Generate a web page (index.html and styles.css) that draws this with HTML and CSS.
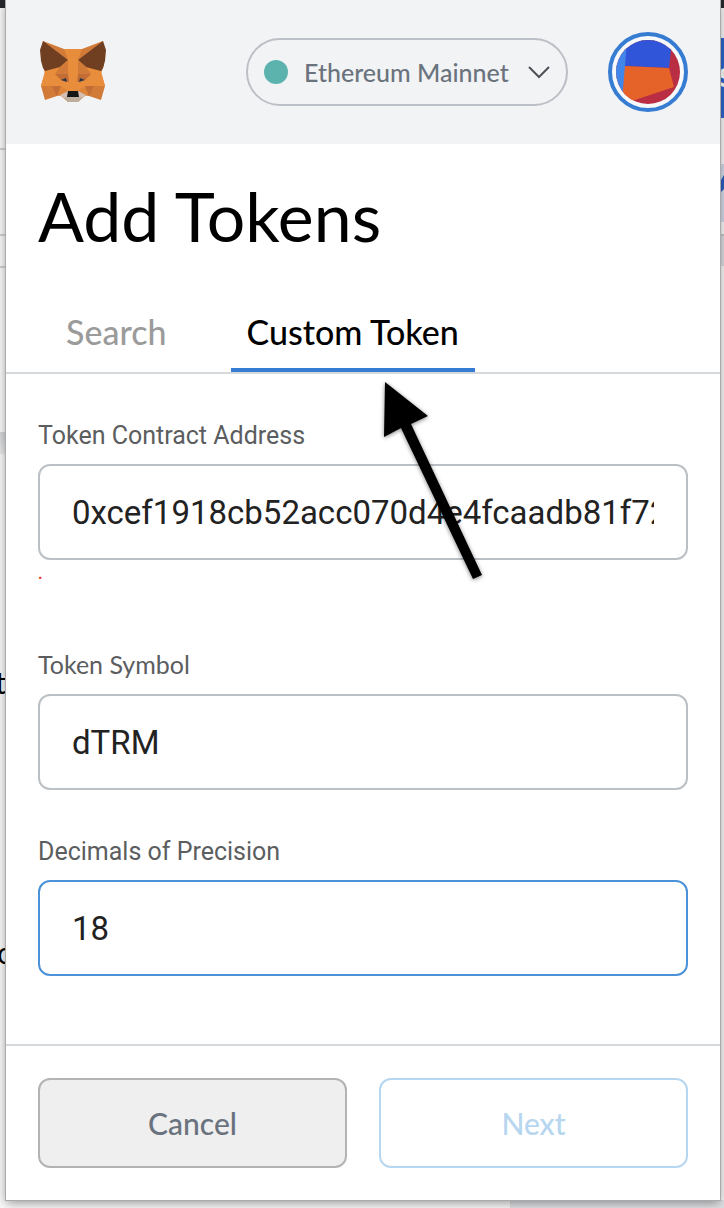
FILE: index.html
```
<!DOCTYPE html>
<html lang="en">
<head>
  <meta charset="UTF-8">
  <meta name="viewport" content="width=device-width, initial-scale=1">
  <title>Add Tokens</title>
  <link rel="stylesheet" href="styles.css">
</head>
<body>

  <!-- page behind the popup -->
  <div class="backdrop" aria-hidden="true">
    <div class="backdrop-bar"></div>
    <div class="backdrop-lines"></div>
    <div class="backdrop-strip"></div>
    <div class="backdrop-button">s</div>
    <div class="backdrop-tag">
      <svg viewBox="0 0 6 58"><path d="M0 21 6 11V25L0 31z" fill="#2c5fc0"/><path d="M1 20 3 22 1 24z" fill="#fff"/></svg>
    </div>
    <div class="backdrop-right"></div>
    <div class="backdrop-bottom"></div>
    <span class="backdrop-text first">t</span>
    <span class="backdrop-text second">o</span>
  </div>

  <main class="popup">
    <header class="app-header">
      <svg class="fox" viewBox="0 0 66 62" role="img" aria-label="MetaMask">
        <path fill="#d27b38" d="M3 0 24 8H42L63 0 64 24 61 32 65 45 61 59 46 54 38 61H28L20 54 5 59 1 45 5 32 2 20z"/>
        <path fill="#e88d3b" d="M5 30 20 26 28 19 24 8H42L38 19 46 26 61 30 65 45H53L46 55 38 50H28L20 55 13 45H1z"/>
        <path fill="#703f22" d="M3 0 28 19 20 26 5 30 3 27 1 20 0 9zM63 0 38 19 46 26 61 30 63 27 65 20 66 9z"/>
        <path fill="#d27b38" d="M28 19V33H15L20 26zM38 19V33H51L46 26z"/>
        <path fill="#c26c36" d="M15 33H28L29 41 21 39zM51 33H38L37 41 45 39zM12 45H21L17 55zM54 45H45L49 55z"/>
        <path fill="#d27b38" d="M21 45 28 50 20 55 17 55zM45 45 38 50 46 55 49 55z" opacity=".5"/>
        <path fill="#d5bfb2" d="M20 54 28 50H38L46 54 38 60H28z"/>
        <path fill="#bfae9e" d="M24 57 28 55H38L42 57 38 61H28z"/>
        <path fill="#161616" d="M28 50H38L39 56H27z"/>
        <path fill="#2b3547" d="M21 39 26 37 27 41zM45 39 40 37 39 41z"/>
      </svg>
      <button class="network" type="button">
        <span class="network-dot"></span>
        <span class="network-name">Ethereum Mainnet</span>
        <svg class="chevron" viewBox="0 0 22 14" aria-hidden="true">
          <path d="M1 2 11 12 21 2" fill="none" stroke="#4d5156" stroke-width="2"/>
        </svg>
      </button>
      <button class="account" type="button" aria-label="My account">
        <svg class="identicon" viewBox="0 0 64 64" aria-hidden="true">
          <path fill="#b92e42" d="M0 0H64V64H0z"/>
          <path fill="#4286ea" d="M0 0H12L7 64H0z"/>
          <path fill="#3055d8" d="M11 0H56L53 28 9 26z"/>
          <path fill="#e56229" d="M9 26 53 28 58 47 16 61 6 60z"/>
        </svg>
      </button>
    </header>

    <h1 class="title">Add Tokens</h1>

    <nav class="tabs">
      <a class="tab" href="#search">Search</a>
      <a class="tab active" href="#custom" aria-current="page">Custom Token</a>
      <svg class="arrow" viewBox="0 0 110 210" aria-hidden="true">
        <path d="M10 6 53 40 36 48 107 199 98 203 26 52 9 61z"/>
      </svg>
    </nav>

    <form class="token-form">
      <div class="fields">
        <div class="field">
          <label for="address">Token Contract Address</label>
          <input id="address" type="text" value="0xcef1918cb52acc070d4e4fcaadb81f7272">
          <p class="error">.</p>
        </div>
        <div class="field">
          <label class="label-brand" for="symbol">Token Symbol</label>
          <input id="symbol" type="text" value="dTRM">
        </div>
        <div class="field">
          <label for="decimals">Decimals of Precision</label>
          <input id="decimals" class="focused" type="text" inputmode="numeric" value="18">
        </div>
      </div>
      <footer class="actions">
        <button class="btn cancel" type="button">Cancel</button>
        <button class="btn next" type="submit" disabled>Next</button>
      </footer>
    </form>
  </main>

</body>
</html>
```
FILE: styles.css
```
* {
  box-sizing: border-box;
}

body {
  margin: 0;
  padding: 0 4px 8px 6px;
  background: #f9f9f9;
  font-family: Lato, sans-serif;
  overflow: hidden;
}

.popup {
  position: relative;
  background: #fff;
  box-shadow: 0 0 0 1px #aaa, 0 3px 10px rgba(0, 0, 0, 0.4);
}

.app-header {
  display: flex;
  align-items: center;
  height: 144px;
  padding: 0 32px 0 34px;
  background: #f2f3f5;
}

.fox {
  width: 66px;
  height: 62px;
  margin-right: auto;
}

.network {
  display: flex;
  align-items: center;
  height: 68px;
  width: 322px;
  margin-right: 40px;
  padding: 0 16px;
  border: 2px solid #bbbfc6;
  border-radius: 34px;
  background: none;
  color: #6a737d;
  font: 500 25px Lato, sans-serif;
}

.network-dot {
  width: 24px;
  height: 24px;
  margin-right: 16px;
  border-radius: 50%;
  background: #5cb3ae;
}

.chevron {
  width: 22px;
  height: 14px;
  margin-left: auto;
}

.account {
  width: 80px;
  height: 80px;
  padding: 4px;
  border: 4px solid #377cd3;
  border-radius: 50%;
  background: #f7f8fa;
}

.identicon {
  display: block;
  width: 64px;
  height: 64px;
  border-radius: 50%;
}

.title {
  margin: 0;
  padding: 28px 32px 0;
  font-size: 68px;
  font-weight: 400;
  line-height: 88px;
  color: #000;
}

.tabs {
  position: relative;
  display: flex;
  gap: 48px;
  margin-top: 36px;
  padding: 0 44px;
  border-bottom: 2px solid #d6d9dc;
}

.tab {
  padding: 16px;
  border-bottom: 4px solid transparent;
  color: #9b9b9b;
  font-size: 34px;
  font-weight: 500;
  line-height: 40px;
  text-decoration: none;
}

.tab.active {
  border-bottom-color: #377cd3;
  color: #000;
}

/* pointer drawn over the form */
.arrow {
  position: absolute;
  z-index: 1;
  top: 80px;
  left: 369px;
  width: 110px;
  height: 210px;
  filter: drop-shadow(0 1px 2px rgba(0, 0, 0, 0.5));
  pointer-events: none;
}

.fields {
  display: flex;
  flex-direction: column;
  gap: 46px;
  padding: 46px 32px 68px;
}

.field label {
  display: block;
  margin-bottom: 12px;
  color: #5b5d5f;
  font-family: Roboto, sans-serif;
  font-size: 25px;
  line-height: 32px;
}

.field .label-brand {
  margin-bottom: 14px;
  font-family: Lato, sans-serif;
}

.field input {
  display: block;
  width: 100%;
  height: 96px;
  padding: 0 32px;
  border: 2px solid #bbc0c5;
  border-radius: 12px;
  background: #fff;
  color: #222;
  font-family: Roboto, sans-serif;
  font-size: 33px;
  outline: none;
}

.field input.focused {
  border-color: #4b92d9;
}

.error {
  height: 24px;
  margin: 4px 0 14px;
  color: #e8432f;
  font: 700 16px/20px Roboto, sans-serif;
}

.actions {
  display: grid;
  grid-template-columns: 1fr 1fr;
  gap: 32px;
  padding: 32px;
  border-top: 2px solid #d6d9dc;
}

.btn {
  height: 90px;
  border: 2px solid #b3b3b3;
  border-radius: 12px;
  background: #efefef;
  color: #6a737d;
  font: 500 30px Lato, sans-serif;
}

.btn.next {
  border-color: #b7d6f0;
  background: #fff;
  color: #b7d6f0;
}

/* pieces of the page that show around the popup */
.backdrop {
  position: absolute;
  inset: 0;
  overflow: hidden;
}

.backdrop-bar {
  height: 8px;
  background: #26292c;
}

.backdrop-lines {
  position: absolute;
  top: 148px;
  left: 0;
  width: 6px;
  height: 120px;
  border: solid #d0d0d5;
  border-width: 2px 0;
}

.backdrop-lines::after {
  content: "";
  display: block;
  margin-top: 84px;
  border-top: 2px solid #d0d0d5;
}

.backdrop-strip {
  position: absolute;
  top: 432px;
  left: 0;
  width: 6px;
  height: 22px;
  background: linear-gradient(#d3d5d7, #e8eaec);
}

.backdrop-button {
  position: absolute;
  top: 38px;
  right: 0;
  width: 6px;
  height: 80px;
  background: #3064cc;
  color: #fff;
  font-size: 36px;
  font-weight: 700;
  line-height: 70px;
}

.backdrop-tag {
  position: absolute;
  top: 164px;
  right: 0;
  width: 6px;
  height: 58px;
  background: #d3dbeb;
}

.backdrop-right {
  position: absolute;
  top: 234px;
  right: 0;
  width: 6px;
  height: 32px;
  border-top: 2px solid #c5c7ca;
  background: #dddee2;
}

.backdrop-bottom {
  position: absolute;
  right: 0;
  bottom: 0;
  width: 214px;
  height: 8px;
  background: #dfe1e4;
}

.backdrop-text {
  position: absolute;
  right: calc(100% - 6px);
  color: #000;
  font-size: 30px;
}

.backdrop-text.first {
  top: 664px;
}

.backdrop-text.second {
  top: 934px;
  right: calc(100% - 14px);
}
```
